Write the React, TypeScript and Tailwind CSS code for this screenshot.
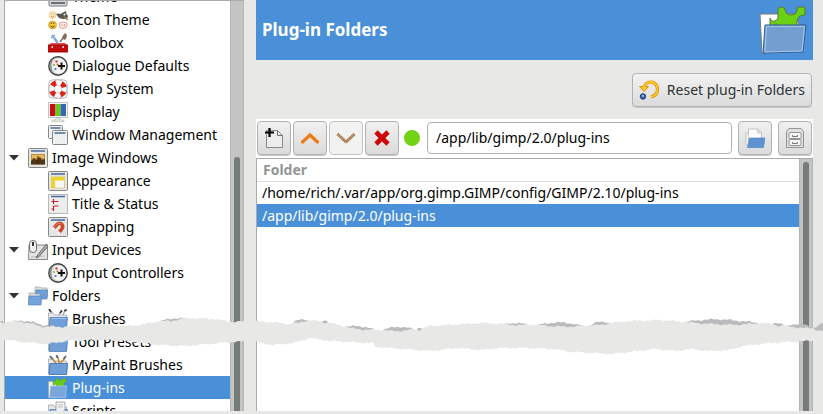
import { useState } from 'react';

type IconName =
  | 'theme'
  | 'iconTheme'
  | 'toolbox'
  | 'controller'
  | 'help'
  | 'display'
  | 'windows'
  | 'imageWindow'
  | 'appearance'
  | 'title'
  | 'snapping'
  | 'devices'
  | 'folders'
  | 'brushes'
  | 'presets'
  | 'mypaint'
  | 'plugins'
  | 'scripts';

type Item = { label: string; icon: IconName; group?: boolean };

const items: Item[] = [
  { label: 'Theme', icon: 'theme' },
  { label: 'Icon Theme', icon: 'iconTheme' },
  { label: 'Toolbox', icon: 'toolbox' },
  { label: 'Dialogue Defaults', icon: 'controller' },
  { label: 'Help System', icon: 'help' },
  { label: 'Display', icon: 'display' },
  { label: 'Window Management', icon: 'windows' },
  { label: 'Image Windows', icon: 'imageWindow', group: true },
  { label: 'Appearance', icon: 'appearance' },
  { label: 'Title & Status', icon: 'title' },
  { label: 'Snapping', icon: 'snapping' },
  { label: 'Input Devices', icon: 'devices', group: true },
  { label: 'Input Controllers', icon: 'controller' },
  { label: 'Folders', icon: 'folders', group: true },
  { label: 'Brushes', icon: 'brushes' },
  { label: 'Tool Presets', icon: 'presets' },
  { label: 'MyPaint Brushes', icon: 'mypaint' },
  { label: 'Plug-ins', icon: 'plugins' },
  { label: 'Scripts', icon: 'scripts' },
];

const folders = ['/home/rich/.var/app/org.gimp.GIMP/config/GIMP/2.10/plug-ins', '/app/lib/gimp/2.0/plug-ins'];

function WindowFrame() {
  return (
    <>
      <rect x=".5" y=".5" width="19" height="19" rx="1" fill="#e3e6e5" stroke="#858887" />
      <path d="M3 3h14" stroke="#4b6a9b" strokeWidth="1.500" />
    </>
  );
}

function BlueFolder() {
  return (
    <>
      <path d="M.5 4h5l1 2h12v12H.5z" fill="#e6e8ea" stroke="#9a9fa5" strokeWidth=".7" />
      <path d="M2 8.500h17.500l-1 11H1z" fill="#6f9fd6" stroke="#4474ad" strokeWidth=".7" />
      <path d="M3 9.500h15.500" stroke="#9fc1e8" />
    </>
  );
}

function TreeIcon({ name }: { name: IconName }) {
  return (
    <svg viewBox="0 0 20 20" className="size-5 shrink-0" fill="none" aria-hidden="true">
      {name === 'theme' && (
        <>
          <rect x="1" y="2" width="18" height="17" rx="1" fill="#d9dcdf" stroke="#777" />
          <path d="M3 16h14M11 5v9" stroke="#6c6f72" strokeWidth="2" />
          <path d="M5 8h4v6H5z" fill="#4f7fbd" />
          <path d="M14 6h3v8h-3z" fill="#7ba3d8" />
        </>
      )}
      {name === 'iconTheme' && (
        <>
          <circle cx="4.500" cy="5" r="3.500" fill="#fbe6b4" stroke="#e5c27c" strokeWidth=".6" />
          <path d="M3 4h.8M5.500 4h.8M3 6.500q1.500 1 3 0" stroke="#b08a4c" strokeWidth=".8" />
          <path d="M8 4q2-1 5 0l1-1 4-2 .5 3 1.500 2-1 3h-4l-4-1z" fill="#5c564e" />
          <circle cx="16.500" cy="4.500" r="1" fill="#eee" />
          <path d="M16 7l4 3" stroke="#9a8360" strokeWidth="1.300" />
          <circle cx="4.500" cy="15" r="4" fill="#f6c736" stroke="#c98f18" strokeWidth=".6" />
          <path d="M2.500 16q2 2.500 4 0" stroke="#60410c" />
          <path d="M3.300 12.500v1.500M5.800 12.500v1.500" stroke="#60410c" />
          <path d="M11.500 14q0-2.500 2-1.500 2-1.500 3.500 0 2-.5 2 2 0 4-4 4t-3.500-4.500z" fill="#fdeae6" stroke="#ea9085" strokeWidth=".9" />
          <path d="M14 14v2M16.500 14v2" stroke="#e58579" strokeWidth=".8" />
        </>
      )}
      {name === 'toolbox' && (
        <>
          <path d="M4 2l5 8M3 5l4-3M7 5l3 5" stroke="#7fa6d8" strokeWidth="1.500" />
          <path d="M12 9l3-4" stroke="#707376" strokeWidth="1.600" />
          <path d="M14 4l3-4 2 2-1 4-2 1z" fill="#8b6a5e" />
          <path d="M3 10h14l3 3H0z" fill="#ee4b4b" />
          <path d="M0 12h20v7.500H0z" fill="#c40c0c" />
          <path d="M0 12h20M1 18.500h18" stroke="#8f0505" strokeWidth=".8" />
          <path d="M3.500 13H5v2H3.500zM14.500 13H16v2h-1.500z" fill="#f6d8d8" />
        </>
      )}
      {name === 'controller' && (
        <>
          <circle cx="10" cy="10" r="9.200" fill="#d3d5d3" stroke="#3f4142" strokeWidth="1.400" />
          <ellipse cx="11" cy="10" rx="7" ry="7.800" fill="#f3f4f2" />
          <path d="M4 4Q1 10 4 16" stroke="#8c8f8d" strokeWidth="1.600" />
          <circle cx="8.500" cy="5.500" r="1.200" fill="#e34040" />
          <circle cx="6" cy="9" r="1.100" fill="#59c13c" />
          <circle cx="9.500" cy="8.500" r="1" fill="#e34040" />
          <circle cx="7.500" cy="13" r="1.100" fill="#3f6fc5" />
          <path d="M13.500 6.500v7M10 10h7" stroke="#111" strokeWidth="2" />
        </>
      )}
      {name === 'help' && (
        <>
          <rect x=".8" y=".8" width="18.400" height="18.400" rx="4" stroke="#9a9d9b" strokeWidth=".7" />
          <circle cx="10" cy="10" r="6.500" stroke="#8d8f8e" strokeWidth="5.600" />
          <circle cx="10" cy="10" r="6.500" stroke="#f7f7f7" strokeWidth="4.800" />
          <circle cx="10" cy="10" r="6.500" stroke="#dc1f1f" strokeWidth="5" strokeDasharray="4.500 5.710" strokeDashoffset="-2.850" />
        </>
      )}
      {name === 'display' && (
        <>
          <rect x=".5" y=".5" width="19" height="15" fill="#f4f4f2" stroke="#c3c6c4" />
          <path d="M2 2h5.500v12H2z" fill="#c80d14" />
          <path d="M7.500 2h5v12h-5z" fill="#62ca1c" />
          <path d="M12.500 2H18v12h-5.500z" fill="#3868a9" />
          <path d="M8 16h4l1 2h3v1.500H4V18h3z" fill="#e7e8e6" stroke="#b5b8b5" strokeWidth=".6" />
        </>
      )}
      {name === 'windows' && (
        <>
          <rect x=".5" y=".5" width="14" height="13" rx="1" fill="#eef0ef" stroke="#858887" />
          <path d="M2.500 3h10" stroke="#4b6a9b" strokeWidth="1.500" />
          <rect x="4.500" y="5.500" width="15" height="14" rx="1" fill="#eef0ef" stroke="#858887" />
          <path d="M6.500 8h11" stroke="#4b6a9b" strokeWidth="1.500" />
        </>
      )}
      {name === 'imageWindow' && (
        <>
          <WindowFrame />
          <path d="M3 6h14v10.500H3z" fill="#c58a38" />
          <path d="M4 7h12v3H4z" fill="#e5b865" />
          <path d="M3 13l3-3 2 2 4-3 2 3 3-1v5.500H3z" fill="#503718" />
          <path d="M10 8v7" stroke="#35240f" />
        </>
      )}
      {name === 'appearance' && (
        <>
          <WindowFrame />
          <path d="M3.500 6h13v11h-13z" fill="#f7f7f7" stroke="#d0ba35" strokeWidth=".6" />
          <path d="M3.500 6h13v3.500H7V17H3.500z" fill="#ecd528" />
        </>
      )}
      {name === 'title' && (
        <>
          <rect x=".5" y=".5" width="19" height="19" fill="#eceeee" stroke="#b6b9b8" />
          <path d="M3 2.500h14" stroke="#4b6a9b" strokeWidth="1.500" />
          <path d="M5.500 5v5M3.500 7.500h7M5.500 12v5M3.500 15h2M5.500 12h5" stroke="#c8232b" strokeWidth="1.200" />
        </>
      )}
      {name === 'snapping' && (
        <>
          <WindowFrame />
          <path d="M5.500 11.500l3.500-4q3-2.500 5 0 1.500 2.500-.5 5l-2.500 3" stroke="#c9492a" strokeWidth="3.600" />
          <path d="M6 10l3.500-3.200q2.500-1.500 4 .2" stroke="#ea8165" />
          <path d="M4.200 13l2-2.300M9.600 17.200l2-2.300" stroke="#f2f2f2" strokeWidth="3.400" />
        </>
      )}
      {name === 'devices' && (
        <>
          <path d="M1 5h18.500v14.500H.5z" fill="#e2e3e2" stroke="#868988" />
          <path d="M3 17l14-1" stroke="#b9bbb9" />
          <rect x="1.500" y=".5" width="7" height="12" rx="3.400" fill="#eff0ef" stroke="#6c6f6e" />
          <path d="M5 2v4" stroke="#222" strokeWidth="1.800" />
          <path d="M18.500 4L10 14.500 8 18l3-1.500L20 6.500z" fill="#a9abaa" stroke="#505352" strokeWidth=".8" />
        </>
      )}
      {name === 'folders' && (
        <>
          <path d="M7 1h5l1 1h6v10H7z" fill="#dcdfe1" stroke="#9da1a5" strokeWidth="0.7" />
          <path d="M8 4h12l-1 9H7z" fill="#6f9fd6" stroke="#4f80ba" strokeWidth=".6" />
          <path d="M1 7h5l1 1h5v10H1z" fill="#dcdfe1" stroke="#9da1a5" strokeWidth=".7" />
          <path d="M1 10h13l-1 9H0z" fill="#75a4da" stroke="#4f80ba" strokeWidth=".6" />
        </>
      )}
      {name === 'brushes' && (
        <>
          <path d="M2 1l5 7M9 8l4-5M17 1l-3 8" stroke="#9a9c9d" strokeWidth="1.200" />
          <path d="M1 0l2 3M12 4l2-2.500M16.500 2l2-1.500" stroke="#2e3133" strokeWidth="1.800" />
          <BlueFolder />
        </>
      )}
      {name === 'presets' && <BlueFolder />}
      {name === 'mypaint' && (
        <>
          <BlueFolder />
          <path d="M4 3l4 5.500M10 2l1 6M17 3l-5 5.500" stroke="#c98b3c" strokeWidth="1.600" />
          <path d="M2 1l2.500 3M8.500 0l1 3M18 1l-2.500 3" stroke="#4c6482" strokeWidth="1.800" />
          <path d="M2 8.500h17.500l-1 11H1z" fill="#6f9fd6" stroke="#4474ad" strokeWidth=".7" />
        </>
      )}
      {name === 'plugins' && (
        <>
          <path d="M.5 3.500h10v16H.5z" fill="#f3f4f3" stroke="#a2a7a5" strokeWidth=".7" />
          <path d="M5 3q2 2 3-1l1-2q3 4 6 1l3-1v4l-2 1v5H8V6L5 7z" fill="#67cc18" stroke="#58982d" strokeWidth=".5" />
          <path d="M2.500 8h16l-1 11.500h-16z" fill="#7aa6da" stroke="#a9c8ec" strokeWidth=".7" />
        </>
      )}
      {name === 'scripts' && (
        <>
          <BlueFolder />
          <path d="M8 1h9v7l-3 4H7l1-3z" fill="#eff0ef" stroke="#989b99" strokeWidth=".8" />
          <path d="M10 4h5M10 6h5" stroke="#bfc2c0" />
        </>
      )}
    </svg>
  );
}

function HeaderIcon() {
  return (
    <svg viewBox="0 0 48 50" className="h-[50px] w-12" aria-hidden="true">
      <path d="M1 9h38v14l-32 25H3z" fill="#fff" stroke="#777b78" />
      <path
        d="M11 13q1 4 5 3 3-1 3-4V5q0-3 3-3 4 0 4 3 1 5 6 5t6-4q-1-4 2-4h6v8q-4 1-5 1-3 2-3 6l-2 9H18v-7q-2 0-3 1l-4 2v-4z"
        fill="#69d112"
        stroke="#54793a"
      />
      <path d="M6 20h41l-3 27-40 1z" fill="#729fcf" stroke="#2f5f9c" />
      <path d="M7.500 21.500h38L43 46l-37 1z" fill="none" stroke="#a9c6e6" />
    </svg>
  );
}

function ResetIcon() {
  return (
    <svg viewBox="0 0 20 20" className="size-5" fill="none" aria-hidden="true">
      <path d="M4.500 8q2-6 7.500-6 6.500 1 6.500 7.500 0 6-6.500 7.500" stroke="#d28a05" strokeWidth="3.200" />
      <path d="M.5 6.500h9L5 11.500z" fill="#ffc51e" stroke="#d28a05" strokeWidth=".8" />
      <path d="M4.500 8q2-6 7.500-6 6.500 1 6.500 7.500 0 6-6.500 7.500" stroke="#ffc928" strokeWidth="1.800" />
      <circle cx="4" cy="16.500" r="2.700" fill="#3e6fb0" stroke="#17376b" />
      <path d="M4 15v1.500" stroke="#cfe0f5" strokeWidth="1.400" />
    </svg>
  );
}

function Scrollbar({ className }: { className: string }) {
  return (
    <div className={`flex w-[14px] shrink-0 flex-col items-center border-x border-[#b3b6b5] bg-[#c3c5c4] ${className}`}>
      <div className="w-1.5 grow rounded-t-full bg-[#777b7a]" />
    </div>
  );
}

const topEdge = [
  [0, 22], [20, 21], [33, 23], [43, 26], [63, 27], [83, 25], [100, 24], [125, 26], [140, 25], [160, 21], [187, 18],
  [213, 19], [233, 22], [250, 21], [270, 22], [290, 24], [307, 20], [327, 22], [347, 27], [377, 30], [397, 30],
  [420, 29], [430, 26], [483, 23], [540, 25], [580, 26], [610, 23], [630, 21], [663, 20], [683, 22], [737, 24],
  [763, 23], [790, 26], [813, 28], [823, 31],
];

const bottomEdge = [
  [0, 39], [23, 42], [47, 44], [67, 41], [100, 40], [127, 41], [140, 43], [160, 45], [187, 46], [207, 44], [233, 42],
  [250, 41], [273, 45], [293, 43], [310, 38], [330, 41], [373, 43], [376, 47], [403, 49], [430, 51], [457, 48],
  [483, 50], [497, 48], [527, 48], [553, 49], [573, 52], [613, 54], [653, 49], [677, 51], [690, 49], [710, 51],
  [730, 50], [743, 46], [770, 43], [807, 41], [823, 40],
];

// from, to, how far the grey rim rises over the paper edge
const shadows = [
  [0, 5, 1], [12, 60, 1], [160, 185, 1], [292, 308, 2], [322, 328, 2], [345, 375, 2], [382, 414, 3], [417, 422, 2],
  [505, 528, 1], [538, 583, 3], [590, 610, 2], [684, 760, 4], [772, 784, 2], [788, 812, 3], [813, 823, 8],
];

const jitter = (x: number) => Math.sin(x * 12.9) * 0.5 + Math.sin(x * 5.3) * 0.4;

function heightAt(edge: number[][], x: number) {
  const i = Math.max(1, edge.findIndex((p) => p[0] >= x));
  const [x0, y0] = edge[i - 1];
  const [x1, y1] = edge[i];
  return y0 + ((y1 - y0) * (x - x0)) / (x1 - x0);
}

function jagged(edge: number[][], from: number, to: number, lift: (t: number) => number = () => 0) {
  const points: string[] = [];
  for (let x = from; x <= to; x += 1) {
    const t = (x - from) / (to - from);
    points.push(`${x},${(heightAt(edge, x) + jitter(x) - lift(t)).toFixed(1)}`);
  }
  return points;
}

function Tear() {
  const strip = [...jagged(topEdge, 0, 823), ...jagged(bottomEdge, 0, 823).reverse()].join(' ');
  return (
    <svg
      viewBox="0 0 823 60"
      preserveAspectRatio="none"
      className="pointer-events-none absolute inset-x-0 top-[300px] h-[60px] w-full"
      aria-hidden="true"
    >
      <polygon points={strip} fill="#e8e8e6" />
      {shadows.map(([from, to, rise]) => (
        <polygon
          key={from}
          points={[
            ...jagged(topEdge, from, to, (t) => (to === 823 ? rise * t : rise * Math.sin(Math.PI * t))),
            ...jagged(topEdge, from, to, (t) => -Math.sin(Math.PI * t)).reverse(),
          ].join(' ')}
          fill="#b9bbbd"
        />
      ))}
    </svg>
  );
}

const toolButton =
  'flex size-[34px] shrink-0 items-center justify-center rounded-[4px] border border-[#b0b1b0] bg-linear-to-b from-[#f0f0f0] to-[#dadbda] shadow-[0_1px_0_#c9c9c9]';

export default function App() {
  const [page, setPage] = useState('Plug-ins');
  const [selected, setSelected] = useState(1);
  const [path, setPath] = useState(folders[1]);

  return (
    <main className="relative flex h-screen gap-3 overflow-hidden bg-[#e8e8e6] pr-2.5 pb-[3px] pl-1 font-['Noto_Sans',sans-serif] text-sm text-black">
      <nav className="flex w-60 shrink-0 overflow-hidden border-t border-l border-[#a9abaa] bg-white">
        <ul className="-mt-4 min-w-0 flex-1">
          {items.map((item) => (
            <li key={item.label}>
              <button
                type="button"
                onClick={() => setPage(item.label)}
                className={`flex h-[23px] w-full items-center gap-1 text-left whitespace-nowrap ${item.group ? 'pl-1' : 'pl-[43px]'} ${
                  page === item.label ? 'bg-[#4a90d9] text-white' : ''
                }`}
              >
                {item.group && (
                  <svg viewBox="0 0 10 6" className="mr-[5px] h-1.5 w-2.5" aria-hidden="true">
                    <path d="M0 0h10L5 5.500z" fill="#2e3436" />
                  </svg>
                )}
                <TreeIcon name={item.icon} />
                {item.label}
              </button>
            </li>
          ))}
        </ul>
        <Scrollbar className="pt-[156px]" />
      </nav>

      <section className="flex min-w-0 flex-1 flex-col">
        <header className="flex h-[60px] shrink-0 items-center justify-between bg-[#4a90d9] px-1.5">
          <h1 className="text-[17px] font-bold text-white">Plug-in Folders</h1>
          <HeaderIcon />
        </header>

        <div className="flex shrink-0 justify-end pt-[13px] pr-px pb-3">
          <button
            type="button"
            className="flex h-[34px] items-center gap-2 rounded-[4px] border border-[#b0b1b0] bg-linear-to-b from-[#f2f2f2] to-[#dadbda] px-1.5 whitespace-nowrap text-[#2e3436] shadow-[0_1px_0_#c9c9c9]"
          >
            <ResetIcon />
            Reset plug-in Folders
          </button>
        </div>

        <div className="flex h-[39px] shrink-0 items-center gap-0.5 bg-white px-px pb-0.5">
          <button type="button" aria-label="Add a new folder" className={toolButton}>
            <svg viewBox="0 0 20 22" className="h-[22px] w-5" fill="none" aria-hidden="true">
              <path d="M2.500 3.500h11l5 5v12h-16z" fill="#ededed" stroke="#8a8a8a" />
              <path d="M13.500 3.500v5h5" stroke="#6d6d6d" />
              <path d="M5.500 1v9M1 5.500h9" stroke="#000" strokeWidth="2.200" />
            </svg>
          </button>
          <button type="button" aria-label="Move the selected folder up" className={toolButton}>
            <svg viewBox="0 0 20 14" className="h-3.5 w-5" fill="none" aria-hidden="true">
              <path d="M2.500 11L10 4l7.500 7" stroke="#ef7a15" strokeWidth="3.200" strokeLinecap="round" />
            </svg>
          </button>
          <button
            type="button"
            aria-label="Move the selected folder down"
            className="flex size-[34px] shrink-0 items-center justify-center rounded-[4px] border border-[#c3c4c3] bg-[#f2f2f1]"
          >
            <svg viewBox="0 0 20 14" className="h-3.5 w-5" fill="none" aria-hidden="true">
              <path d="M1.500 3l8.500 8 8.500-8" stroke="#d6b18d" strokeWidth="3" />
              <path d="M1.500 3l8.500 8 8.500-8" stroke="#8e6543" strokeWidth="2.800" strokeDasharray="1 1" />
            </svg>
          </button>
          <button type="button" aria-label="Remove the selected folder" className={toolButton}>
            <svg viewBox="0 0 18 18" className="size-[18px]" fill="none" aria-hidden="true">
              <path d="M3 3l12 12M15 3L3 15" stroke="#cc0606" strokeWidth="4.600" strokeLinejoin="round" />
            </svg>
          </button>
          <div className="mx-[3px] size-4 shrink-0 rounded-full bg-[#73d216]" />
          <input
            type="text"
            aria-label="Folder path"
            value={path}
            onChange={(e) => setPath(e.target.value)}
            className="mr-1 ml-0.5 h-8 min-w-0 flex-1 rounded-[4px] border border-[#b0b1b0] bg-white px-2 outline-none"
          />
          <button type="button" aria-label="Select a folder" className={toolButton}>
            <svg viewBox="0 0 20 20" className="size-5" aria-hidden="true">
              <path d="M1 5h5v12H1z" fill="#f7f7f7" stroke="#b8bbb9" strokeWidth=".8" />
              <path d="M3.500 1h9l4 4v12h-13z" fill="#fcfcfc" stroke="#b8bbb9" strokeWidth=".8" />
              <path d="M12.500 1v4h4z" fill="#e2e3e2" stroke="#b8bbb9" strokeWidth=".6" />
              <path d="M4.500 10H20l-1.500 9.500H2.500z" fill="#5d93d0" stroke="#4a7fbe" strokeWidth=".6" />
            </svg>
          </button>
          <button type="button" aria-label="Show in file manager" className={`ml-1 ${toolButton}`}>
            <svg viewBox="0 0 18 20" className="h-5 w-[18px]" fill="none" aria-hidden="true">
              <path d="M3 .5h12l2.500 3v16H.5v-16z" fill="#dfe0df" stroke="#939594" />
              <rect x="3" y="4.500" width="12" height="6" rx="1" fill="#f5f5f5" stroke="#939594" />
              <rect x="3" y="11.500" width="12" height="6" rx="1" fill="#f5f5f5" stroke="#939594" />
              <path d="M6.500 7v1.500h5V7M6.500 14v1.500h5V14" stroke="#777978" />
            </svg>
          </button>
        </div>

        <div className="flex min-h-0 flex-1 border-t border-l border-[#a9abaa] bg-white">
          <div className="min-w-0 flex-1">
            <table className="w-full table-fixed border-collapse text-left">
              <thead>
                <tr className="h-[22px] border-b border-[#dcdddc]">
                  <th scope="col" className="px-1.5 py-0 font-bold text-[#929595]">Folder</th>
                </tr>
              </thead>
              <tbody>
                {folders.map((folder, i) => (
                  <tr
                    key={folder}
                    onClick={() => {
                      setSelected(i);
                      setPath(folder);
                    }}
                    className={`h-[23px] ${selected === i ? 'bg-[#4a90d9] text-white' : ''}`}
                  >
                    <td className="truncate px-[5px] py-0">{folder}</td>
                  </tr>
                ))}
              </tbody>
            </table>
          </div>
          <Scrollbar className="pt-[3px]" />
        </div>
      </section>

      <Tear />
    </main>
  );
}
